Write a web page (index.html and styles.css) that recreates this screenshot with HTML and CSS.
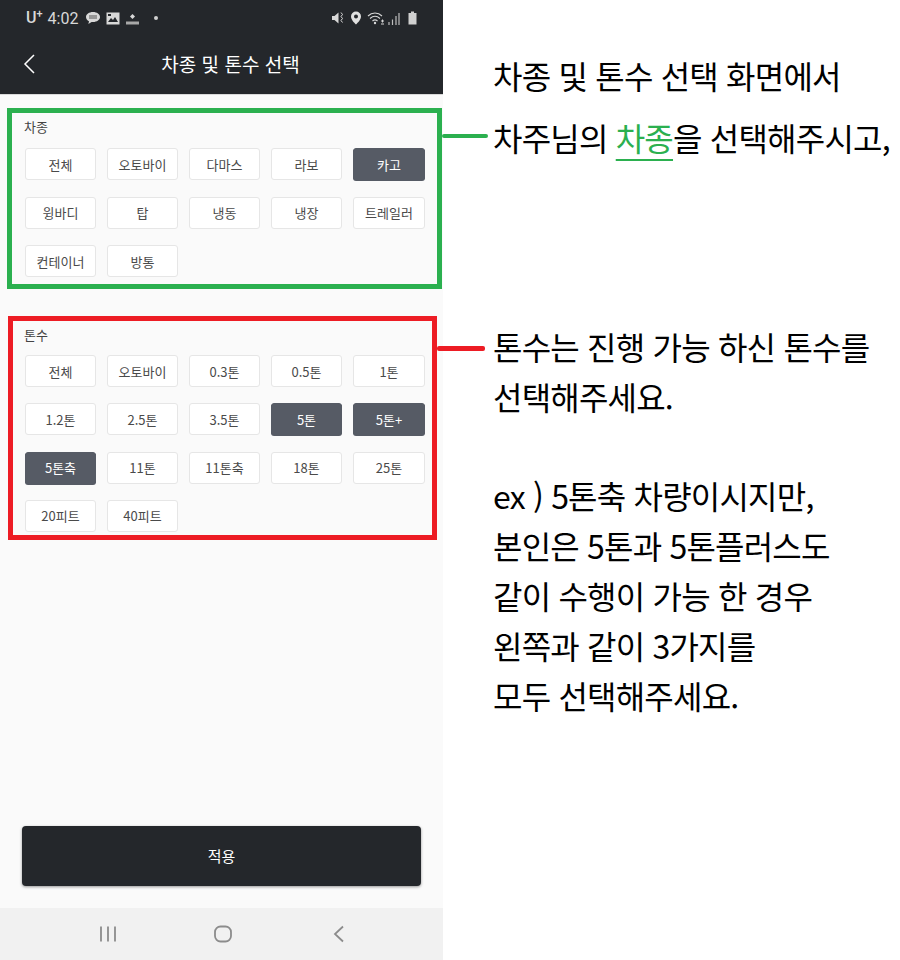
FILE: index.html
```html
<!DOCTYPE html>
<html lang="ko">
<head>
  <meta charset="UTF-8" />
  <title>차종 및 톤수 선택</title>
  <link rel="stylesheet" href="styles.css">
</head>
<body>
  <div class="page">
    <!-- 좌측: 휴대폰 화면 -->
    <div class="phone">
      <div class="status-bar">
        <div class="status-left">
          <span class="carrier">U<sup>+</sup></span>
          <span class="clock">4:02</span>
          <svg class="icon" width="16" height="14" viewBox="0 0 16 14"><path d="M8 1C4 1 1 3.200 1 6c0 1.800 1.200 3.300 3 4.200L3.400 13 6.600 10.900C7.100 11 7.500 11 8 11c4 0 7-2.200 7-5S12 1 8 1z" fill="#d8d8d8"/><path d="M4 5h8M4 7h8" stroke="#555" stroke-width="1"/></svg>
          <svg class="icon" width="14" height="13" viewBox="0 0 14 13"><rect x="0.500" y="0.500" width="13" height="12" fill="#d8d8d8"/><path d="M2 10l3-4 2 2 2-3 3 5z" fill="#24272b"/><rect x="2" y="2" width="3" height="2" fill="#24272b"/></svg>
          <svg class="icon" width="15" height="14" viewBox="0 0 15 14"><path d="M7.500 3l2.500 2.500-2.500 2.500L5 5.500z" fill="#d8d8d8"/><rect x="1" y="10.500" width="13" height="3" fill="#a8a8a8"/></svg>
          <span class="dot"></span>
        </div>
        <div class="status-right">
          <svg class="icon" width="14" height="14" viewBox="0 0 14 14"><path d="M1 5h2.500L7.500 1.500v11L3.500 9H1z" fill="#d8d8d8"/><path d="M10 1.500l1.500 2-1.500 2 1.500 2-1.500 2 1.500 2" stroke="#d8d8d8" fill="none"/></svg>
          <svg class="icon" width="12" height="14" viewBox="0 0 12 14"><path fill-rule="evenodd" d="M6 0.500a5 5 0 0 1 5 5c0 3-3 6-5 8-2-2-5-5-5-8a5 5 0 0 1 5-5zM6 3.500a2 2 0 1 0 0 4 2 2 0 0 0 0-4z" fill="#e0e0e0"/></svg>
          <svg class="icon" width="18" height="14" viewBox="0 0 18 14"><path d="M1 5c4-4 10-4 14 0M3 7.500c3-2.700 7-2.700 10 0M5.500 10c1.500-1.300 3.500-1.300 5 0" stroke="#d8d8d8" fill="none" stroke-width="1.100"/><circle cx="8" cy="12" r="1.200" fill="#d8d8d8"/><path d="M14 10h3M15.500 8.500v3M14 13h3" stroke="#d8d8d8"/></svg>
          <svg class="icon signal" width="12" height="13" viewBox="0 0 12 13"><path d="M1 10v3M4.500 7.500V13M8 4v9M11 1v12" stroke="#bdbdbd" stroke-width="1.200"/></svg>
          <svg class="icon battery" width="9" height="14" viewBox="0 0 9 14"><path d="M3 0.500h3v1.500h2.500v11.500h-8V2H3z" fill="#d0d0d0"/></svg>
        </div>
      </div>
      <div class="title-bar">
        <svg class="back" width="14" height="22" viewBox="0 0 14 22"><path d="M12 2L3 11l9 9" stroke="#fff" stroke-width="1.500" fill="none"/></svg>
        <span class="title">차종 및 톤수 선택</span>
      </div>

      <div class="content">
        <div class="group group-car">
          <div class="group-label">차종</div>
          <div class="chips">
            <button class="chip">전체</button>
            <button class="chip">오토바이</button>
            <button class="chip">다마스</button>
            <button class="chip">라보</button>
            <button class="chip on">카고</button>
            <button class="chip">윙바디</button>
            <button class="chip">탑</button>
            <button class="chip">냉동</button>
            <button class="chip">냉장</button>
            <button class="chip">트레일러</button>
            <button class="chip">컨테이너</button>
            <button class="chip">방통</button>
          </div>
        </div>

        <div class="group group-ton">
          <div class="group-label">톤수</div>
          <div class="chips">
            <button class="chip">전체</button>
            <button class="chip">오토바이</button>
            <button class="chip">0.3톤</button>
            <button class="chip">0.5톤</button>
            <button class="chip">1톤</button>
            <button class="chip">1.2톤</button>
            <button class="chip">2.5톤</button>
            <button class="chip">3.5톤</button>
            <button class="chip on">5톤</button>
            <button class="chip on">5톤+</button>
            <button class="chip on">5톤축</button>
            <button class="chip">11톤</button>
            <button class="chip">11톤축</button>
            <button class="chip">18톤</button>
            <button class="chip">25톤</button>
            <button class="chip">20피트</button>
            <button class="chip">40피트</button>
          </div>
        </div>

        <button class="apply-btn">적용</button>
      </div>

      <div class="nav-bar">
        <svg width="18" height="16" viewBox="0 0 18 16"><path d="M2 0.500v15M9 0.500v15M16 0.500v15" stroke="#8c8c8c" stroke-width="1.800"/></svg>
        <svg width="18" height="18" viewBox="0 0 18 18"><rect x="1" y="1.500" width="16" height="15" rx="5.500" stroke="#8c8c8c" stroke-width="1.800" fill="none"/></svg>
        <svg class="nav-back" width="12" height="18" viewBox="0 0 12 18"><path d="M10 1.500L2 9l8 7.500" stroke="#8c8c8c" stroke-width="1.800" fill="none"/></svg>
      </div>
    </div>

    <!-- 우측: 설명 -->
    <div class="notes">
      <p class="note-line first">차종 및 톤수 선택 화면에서</p>
      <p class="note-line second">차주님의 <span class="hl">차종</span>을 선택해주시고,</p>
      <p class="note-line third">톤수는 진행 가능 하신 톤수를</p>
      <p class="note-line">선택해주세요.</p>
      <p class="note-line example">ex ) 5톤축 차량이시지만,</p>
      <p class="note-line">본인은 5톤과 5톤플러스도</p>
      <p class="note-line">같이 수행이 가능 한 경우</p>
      <p class="note-line">왼쪽과 같이 3가지를</p>
      <p class="note-line">모두 선택해주세요.</p>
    </div>

    <!-- 주석 박스 -->
    <div class="mark mark-green"></div>
    <div class="mark-line line-green"></div>
    <div class="mark mark-red"></div>
    <div class="mark-line line-red"></div>
  </div>
</body>
</html>
```

FILE: styles.css
```css
* {
  box-sizing: border-box;
}
body {
  margin: 0;
  background-color: #ffffff;
  font-family: "Noto Sans CJK KR", "Noto Sans", sans-serif;
}
.page {
  position: relative;
  display: flex;
  width: 900px;
  height: 960px;
  overflow: hidden;
}
.phone {
  display: flex;
  flex-direction: column;
  width: 443px;
  height: 960px;
  background-color: #fafafa;
}
.status-bar {
  display: flex;
  justify-content: space-between;
  align-items: center;
  height: 36px;
  padding: 0 26px 0 26px;
  background-color: #24272b;
  color: #d8d8d8;
}
.status-left,
.status-right {
  display: flex;
  align-items: center;
  gap: 5px;
}
.carrier {
  font-family: "Roboto", sans-serif;
  font-size: 16px;
  font-weight: 500;
  line-height: 18px;
}
.carrier sup {
  font-size: 11px;
  line-height: 0;
  vertical-align: 6px;
}
.clock {
  font-family: "Roboto", sans-serif;
  font-size: 16px;
  margin-right: 2px;
}
.dot {
  width: 4px;
  height: 4px;
  margin-left: 9px;
  border-radius: 50%;
  background-color: #d0d0d0;
}
.status-right .signal {
  margin-left: -2px;
}
.status-right .battery {
  margin-left: 3px;
}
.title-bar {
  position: relative;
  display: flex;
  justify-content: center;
  align-items: center;
  height: 59px;
  padding-bottom: 2px;
  padding-left: 18px;
  background-color: #24272b;
  border-bottom: 1px solid #d9d9d9;
}
.back {
  position: absolute;
  left: 22px;
  top: 17px;
}
.title {
  font-size: 19px;
  color: #ffffff;
  line-height: 24px;
}
.content {
  display: flex;
  flex-direction: column;
  flex: 1;
  padding: 0 22px;
}
.group {
  padding: 0 0 0 3px;
}
.group-car {
  margin-top: 23px;
}
.group-ton {
  margin-top: 49px;
}
.group-label {
  height: 18px;
  margin-bottom: 12px;
  margin-left: -1px;
  font-size: 13px;
  line-height: 18px;
  color: #444444;
}
.group-ton .group-label {
  margin-bottom: 11px;
}
.chips {
  display: grid;
  grid-template-columns: repeat(4, 71px) 72px;
  column-gap: 11px;
  row-gap: 16.500px;
}
.group-ton .chips {
  row-gap: 16.330px;
}
.chip {
  height: 32px;
  padding: 0;
  background-color: #ffffff;
  border: 1px solid #e6e6e6;
  border-radius: 3px;
  color: #4a4a4a;
  font-family: inherit;
  font-size: 13px;
}
.chip.on {
  background-color: #565b65;
  border-color: #565b65;
  box-shadow: 0 1px 0 #565b65;
  color: #ffffff;
}
.apply-btn {
  height: 60px;
  margin-top: auto;
  margin-bottom: 22px;
  padding-bottom: 2px;
  background-color: #24272b;
  border: none;
  border-radius: 4px;
  box-shadow: 0 1px 3px rgba(0, 0, 0, 0.4);
  color: #ffffff;
  font-family: inherit;
  font-size: 15px;
}
.nav-bar {
  display: flex;
  align-items: center;
  gap: 97px;
  height: 52px;
  padding-left: 99px;
  background-color: #f1f1f1;
}
.nav-back {
  margin-left: 4px;
}
.notes {
  flex: 1;
  padding: 50px 0 0 50px;
}
.note-line {
  margin: 0;
  height: 50px;
  font-size: 32px;
  line-height: 50px;
  letter-spacing: -0.800px;
  color: #000000;
  white-space: nowrap;
}
.note-line.second {
  margin-top: 12px;
}
.note-line.third {
  margin-top: 159px;
}
.note-line.example {
  margin-top: 49px;
}
.hl {
  color: #2bb04f;
  text-decoration: underline;
  text-decoration-thickness: 2px;
  text-underline-offset: 8px;
  text-decoration-skip-ink: none;
}
.mark {
  position: absolute;
  border-style: solid;
  border-width: 5px;
}
.mark-green {
  left: 7px;
  top: 108px;
  width: 435px;
  height: 181px;
  border-color: #2bb04f;
}
.mark-red {
  left: 8px;
  top: 316px;
  width: 429px;
  height: 224px;
  border-color: #ed1c24;
}
.mark-line {
  position: absolute;
  border-radius: 2px;
}
.line-green {
  left: 442px;
  top: 134px;
  width: 46px;
  height: 4px;
  background-color: #2bb04f;
}
.line-red {
  left: 437px;
  top: 346px;
  width: 48px;
  height: 5px;
  background-color: #ed1c24;
}
```
